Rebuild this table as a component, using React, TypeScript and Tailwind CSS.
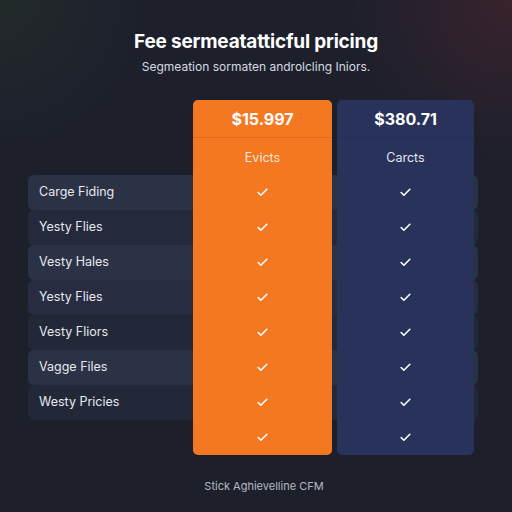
import React from 'react';
import { Check } from 'lucide-react';

const rows = [
  { label: 'Carge Fiding', bg: 'bg-[#2c3246]' },
  { label: 'Yesty Flies', bg: 'bg-[#242a3c]' },
  { label: 'Vesty Hales', bg: 'bg-[#2c3246]' },
  { label: 'Yesty Flies', bg: 'bg-[#272c40]' },
  { label: 'Vesty Fliors', bg: 'bg-[#232839]' },
  { label: 'Vagge Files', bg: 'bg-[#2c3246]' },
  { label: 'Westy Pricies', bg: 'bg-[#232839]' },
  { label: '', bg: 'bg-transparent' },
];

const Tick = () => <Check size={13} strokeWidth={3} className="text-white" />;

const App = () => {
  return (
    <div
      className="w-[512px] h-[512px] overflow-hidden flex flex-col items-center bg-[#1d202b] bg-[radial-gradient(circle_at_100%_0%,rgba(110,40,50,0.35),transparent_22%),radial-gradient(circle_at_0%_0%,rgba(50,70,40,0.25),transparent_20%)] text-white"
      style={{ fontFamily: 'Inter, "Liberation Sans", sans-serif' }}
    >
      <h1 className="mt-[31px] text-[19px] leading-[22px] font-bold tracking-[-0.2px]">Fee sermeatatticful pricing</h1>
      <p className="mt-[7px] text-[12px] leading-[14px] text-[#d6d9e0]">Segmeation sormaten androlcling Iniors.</p>

      <div className="mt-[26px] mr-[6px] w-[450px] flex flex-col">
        {/* header */}
        <div className="flex h-[75px]">
          <div className="w-[165px]" />
          <div className="w-[139px] flex flex-col bg-[#f47722] rounded-t-[5px]">
            <div className="h-[38px] flex items-center justify-center text-[16px] font-bold border-b border-[#e06a1c]">$15.997</div>
            <div className="flex-1 flex items-center justify-center pt-[3px] text-[12.5px] text-[#fde8d8]">Evicts</div>
          </div>
          <div className="w-[5px]" />
          <div className="w-[137px] flex flex-col bg-[#29325a] rounded-t-[5px]">
            <div className="h-[38px] flex items-center justify-center text-[16px] font-bold border-b border-[#252d52]">$380.71</div>
            <div className="flex-1 flex items-center justify-center pt-[3px] text-[12.5px] text-[#e3e6f0]">Carcts</div>
          </div>
        </div>

        {rows.map((r, i) => {
          const last = i === rows.length - 1;
          return (
            <div key={i} className={`flex h-[35px] rounded-[6px] ${r.bg}`}>
              <div className="w-[165px] flex items-center pl-[11px] text-[12.5px] text-[#e6e8ee]">{r.label}</div>
              <div className={`w-[139px] flex items-center justify-center bg-[#f47722] ${last ? 'rounded-b-[5px]' : ''}`}>
                <Tick />
              </div>
              <div className="w-[5px]" />
              <div className={`w-[137px] flex items-center justify-center bg-[#29325a] ${last ? 'rounded-b-[5px]' : ''}`}>
                <Tick />
              </div>
            </div>
          );
        })}
      </div>

      <p className="mt-[23px] ml-[16px] text-[11px] text-[#b4b8c4]">Stick Aghievelline CFM</p>
    </div>
  );
};

export default App;
